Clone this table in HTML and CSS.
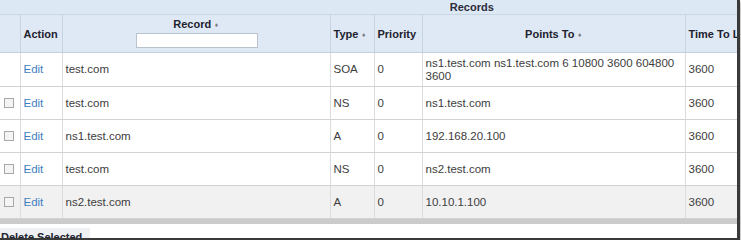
FILE: index.html
```html
<!DOCTYPE html>
<html>
<head>
<meta charset="utf-8">
<link rel="stylesheet" href="styles.css">
</head>
<body>
<div class="shot">
  <table class="grid">
    <colgroup>
      <col class="c-chk"><col class="c-act"><col class="c-rec"><col class="c-type"><col class="c-pri"><col class="c-pts"><col class="c-ttl"><col class="c-more">
    </colgroup>
    <thead>
      <tr class="title"><th colspan="8">Records</th></tr>
      <tr class="heads">
        <th></th>
        <th class="left">Action</th>
        <th class="center">
          <div class="rec-label">Record <span class="sort">♦</span></div>
          <div class="filter"></div>
        </th>
        <th class="left">Type <span class="sort">♦</span></th>
        <th class="left">Priority</th>
        <th class="center">Points To <span class="sort">♦</span></th>
        <th class="left nowrap">Time To Live</th>
        <th></th>
      </tr>
    </thead>
    <tbody>
      <tr>
        <td></td><td><a class="edit">Edit</a></td><td>test.com</td><td>SOA</td><td>0</td>
        <td>ns1.test.com ns1.test.com 6 10800 3600 604800 3600</td><td>3600</td><td></td>
      </tr>
      <tr>
        <td><span class="box"></span></td><td><a class="edit">Edit</a></td><td>test.com</td><td>NS</td><td>0</td>
        <td>ns1.test.com</td><td>3600</td><td></td>
      </tr>
      <tr>
        <td><span class="box"></span></td><td><a class="edit">Edit</a></td><td>ns1.test.com</td><td>A</td><td>0</td>
        <td>192.168.20.100</td><td>3600</td><td></td>
      </tr>
      <tr>
        <td><span class="box"></span></td><td><a class="edit">Edit</a></td><td>test.com</td><td>NS</td><td>0</td>
        <td>ns2.test.com</td><td>3600</td><td></td>
      </tr>
      <tr class="alt">
        <td><span class="box"></span></td><td><a class="edit">Edit</a></td><td>ns2.test.com</td><td>A</td><td>0</td>
        <td>10.10.1.100</td><td>3600</td><td></td>
      </tr>
    </tbody>
    <tfoot>
      <tr class="foot"><td colspan="8"></td></tr>
    </tfoot>
  </table>
  <div class="actions"><span class="btn">Delete Selected</span></div>
</div>
</body>
</html>
```
FILE: styles.css
```css
html, body {
  margin: 0;
  padding: 0;
  background: #ffffff;
}
body {
  font-family: "Liberation Sans", Arial, sans-serif;
  color: #333;
}
.shot {
  width: 737px;
  height: 238px;
  overflow: hidden;
  border-right: 3px solid #3a3a3a;
  border-bottom: 2px solid #3a3a3a;
  box-shadow: 1px 2px 2px #b8b8b8;
  background: #fff;
}
.grid {
  width: 944px;
  table-layout: fixed;
  border-collapse: collapse;
  font-size: 11.5px;
}
.c-chk { width: 20px; }
.c-act { width: 42px; }
.c-rec { width: 268px; }
.c-type { width: 44px; }
.c-pri { width: 48px; }
.c-pts { width: 263px; }
.c-ttl { width: 80px; }
.title th {
  height: 14px;
  padding: 0;
  font-size: 11px;
  font-weight: bold;
  color: #2b2b3a;
  background: #dde8f5;
  border-bottom: 1px solid #c9d6e6;
  text-align: center;
  line-height: 14px;
}
.heads th {
  height: 37px;
  padding: 0 3px;
  font-size: 11px;
  font-weight: bold;
  color: #22222e;
  background: #dfe9f6;
  border-right: 1px solid #c8d3e1;
  border-bottom: 1px solid #c5cfdb;
  vertical-align: middle;
}
.heads th.left { text-align: left; }
.heads th.center { text-align: center; }
.nowrap { white-space: nowrap; }
.rec-label { margin-top: -2px; }
.sort {
  font-family: "DejaVu Sans", sans-serif;
  font-size: 5px;
  color: #777;
  vertical-align: middle;
}
.filter {
  width: 120px;
  height: 13px;
  margin: 3px 0 0 70px;
  background: #fff;
  border: 1px solid #b9c3cf;
}
tbody td {
  height: 26px;
  padding: 3px 3px;
  line-height: 13px;
  color: #3d3d3d;
  border-right: 1px solid #dcdcdc;
  border-bottom: 1px solid #d2d2d2;
  vertical-align: middle;
}
tbody tr:first-child td { height: 27px; }
tbody tr.alt td { background: #f1f1f1; }
.edit {
  color: #3f7fc0;
  text-decoration: none;
}
.box {
  display: block;
  width: 8px;
  height: 8px;
  margin-left: 1px;
  border: 1px solid #a8a8a8;
  background: #f4f4f4;
}
.foot td {
  height: 5px;
  padding: 0;
  background: #cbcbcb;
}
.actions {
  display: flex;
  padding-top: 4px;
}
.btn {
  display: block;
  padding: 3px 8px 2px 1px;
  font-size: 11px;
  font-weight: bold;
  color: #1f2433;
  background: #eef0f3;
  line-height: 12px;
}
```
